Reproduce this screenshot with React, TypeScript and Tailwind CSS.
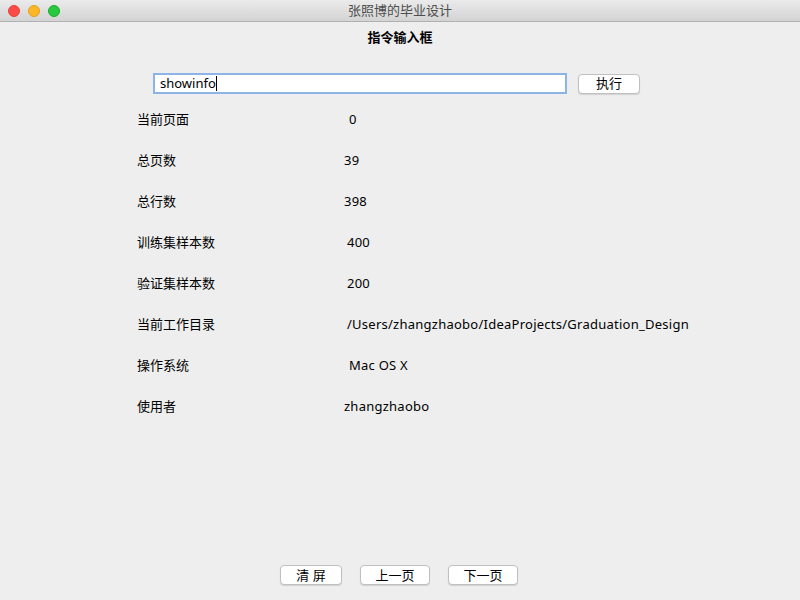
import React from "react";

const font = { fontFamily: '"Noto Sans", "Noto Sans CJK SC", sans-serif' };

const rows: { label: string; value: string; pad: string }[] = [
  { label: "当前页面", value: "0", pad: "pl-[12px]" },
  { label: "总页数", value: "39", pad: "pl-[7px]" },
  { label: "总行数", value: "398", pad: "pl-[7px]" },
  { label: "训练集样本数", value: "400", pad: "pl-[10px]" },
  { label: "验证集样本数", value: "200", pad: "pl-[10px]" },
  { label: "当前工作目录", value: "/Users/zhangzhaobo/IdeaProjects/Graduation_Design", pad: "pl-[10px]" },
  { label: "操作系统", value: "Mac OS X", pad: "pl-[12px]" },
  { label: "使用者", value: "zhangzhaobo", pad: "pl-[7px]" },
];

function Btn({ children, w }: { children: React.ReactNode; w: string }) {
  return (
    <div
      className={`${w} h-[20px] flex items-center justify-center rounded-[4px] bg-white border border-[#c0c0c0] shadow-[0_1px_1px_rgba(0,0,0,0.12)] text-[13px] text-black leading-none`}
    >
      {children}
    </div>
  );
}

export default function App() {
  return (
    <div className="w-[800px] h-[600px] bg-[#eeeeee] flex flex-col overflow-hidden" style={font}>
      {/* title bar */}
      <div className="h-[22px] flex items-center bg-gradient-to-b from-[#ebebeb] to-[#d3d3d3] border-b border-[#b1b1b1] relative shrink-0">
        <div className="flex gap-[8px] pl-[8px]">
          <span className="w-[12px] h-[12px] rounded-full bg-[#fc4a46] border border-[#e0443e]" />
          <span className="w-[12px] h-[12px] rounded-full bg-[#fdb626] border border-[#dea123]" />
          <span className="w-[12px] h-[12px] rounded-full bg-[#27c93f] border border-[#1aab29]" />
        </div>
        <div className="absolute inset-0 flex items-center justify-center text-[13px] text-[#4d4d4d]">
          张照博的毕业设计
        </div>
      </div>

      {/* header */}
      <div className="h-[32px] flex items-center justify-center text-[13px] font-bold text-black">
        指令输入框
      </div>

      {/* input row */}
      <div className="flex items-center pl-[153px] mt-[19px] gap-[11px]">
        <div className="w-[414px] h-[21px] bg-white border-[2px] border-[#8db4e6] flex items-center pl-[5px] text-[13px] text-black">
          showinfo<span className="w-[1px] h-[15px] bg-black" />
        </div>
        <Btn w="w-[62px]">执行</Btn>
      </div>

      {/* rows */}
      <div className="flex flex-col pl-[137px] mt-[16px]">
        {rows.map((r) => (
          <div key={r.label} className="h-[41px] flex items-start text-[13px] text-black">
            <div className="w-[200px] leading-[18px]">{r.label}</div>
            <div className={`${r.pad} leading-[18px] tracking-[0.25px]`}>{r.value}</div>
          </div>
        ))}
      </div>

      <div className="flex-1" />

      {/* bottom buttons */}
      <div className="flex pl-[280px] gap-[18px] pb-[15px]">
        <Btn w="w-[62px]">清 屏</Btn>
        <Btn w="w-[70px]">上一页</Btn>
        <Btn w="w-[70px]">下一页</Btn>
      </div>
    </div>
  );
}
